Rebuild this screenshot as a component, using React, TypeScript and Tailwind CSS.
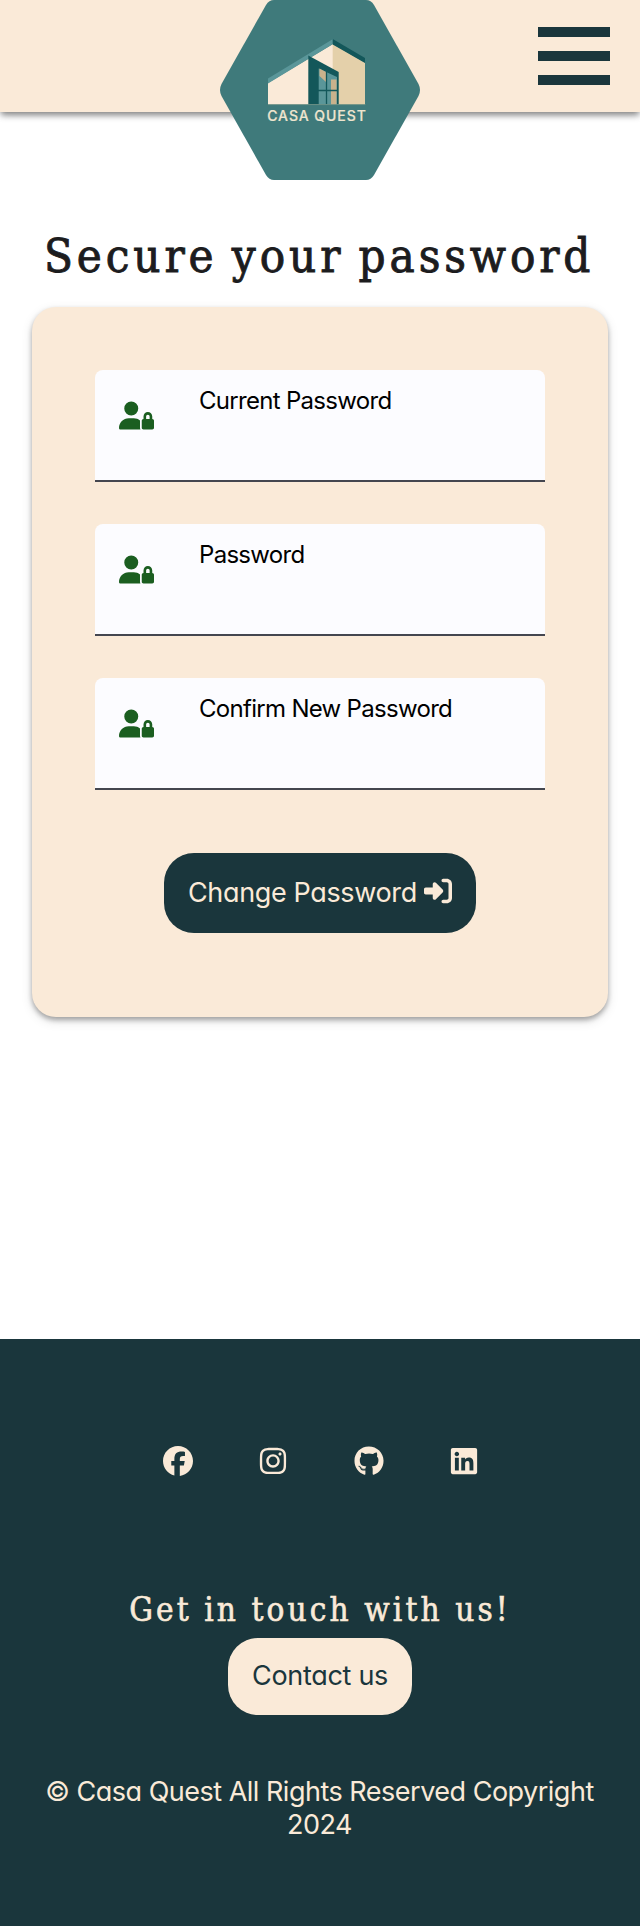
import React from "react";
import {
  FaUserLock,
  FaRightToBracket,
  FaFacebook,
  FaInstagram,
  FaGithub,
  FaLinkedin,
} from "react-icons/fa6";

const fields = ["Current Password", "Password", "Confirm New Password"];
const socials = [FaFacebook, FaInstagram, FaGithub, FaLinkedin];

function Logo() {
  return (
    <svg className="absolute left-[220px] top-0 h-[180px] w-[200px]" viewBox="0 0 200 180">
      <path
        fill="#3f7a7b"
        d="M54 0H146Q151 0 154 5L198.500 84Q201.500 90 198.500 96L154 175Q151 180 146 180H54Q49 180 46 175L1.500 96Q-1.500 90 1.500 84L46 5Q49 0 54 0Z"
      />
      <path fill="#faead8" d="M48 83L113 44V104.500H48Z" />
      <path fill="#5a9699" d="M48 78.500L113 39V44L48 83.500Z" />
      <path fill="#e4d0aa" d="M112.700 44L145 62.500V104.500H112.700Z" />
      <path fill="#13575a" d="M112.700 39L145 58V63L112.700 44.500Z" />
      <path fill="#13575a" d="M88.300 55.500L118.700 72V104.500H88.300Z" />
      <path fill="#5a9699" d="M98.700 68.500L117 77V104.500H98.700Z" />
      <path fill="#c9b28c" d="M99.500 68.500L106 72V82L99.500 76ZM111 79.500H116.500V104.500H111Z" />
      <path stroke="#13575a" strokeWidth="1.300" d="M106.500 72V104M98 90.500H118" />
      <path stroke="#6d9184" strokeWidth="0.800" d="M48 104.600H145.500" />
      <text
        x="47.200"
        y="120.600"
        fill="#eee5cf"
        fontFamily="Inter, sans-serif"
        fontSize="14"
        fontWeight="500"
        stroke="#eee5cf"
        strokeWidth="0.200"
        textLength="98.600"
      >
        CASA QUEST
      </text>
    </svg>
  );
}

export default function App() {
  return (
    <div className="flex h-[1926px] w-[640px] flex-col bg-white font-[Inter,sans-serif]">
      <header className="relative flex h-28 shrink-0 justify-end bg-[#faead8] pr-[30px] pt-[27px] shadow-[0_4px_6px_-1px_rgba(0,0,0,0.4),0_2px_10px_-1px_rgba(0,0,0,0.2)]">
        <Logo />
        <button aria-label="Menu" className="flex h-[58px] w-[72px] flex-col justify-between">
          <span className="h-2.5 w-full bg-[#1a363c]" />
          <span className="h-2.5 w-full bg-[#1a363c]" />
          <span className="h-2.5 w-full bg-[#1a363c]" />
        </button>
      </header>

      <main className="flex h-[1227px] shrink-0 flex-col px-8">
        <h1 className="mt-[115px] h-[80px] whitespace-nowrap pl-[12px] font-['DejaVu_Serif_Condensed','DejaVu_Serif',serif] text-[47px] leading-[58px] tracking-[3.900px] text-[#1c1c1e] [-webkit-text-stroke:0.9px_#1c1c1e] [word-spacing:-3px]">
          Secure your password
        </h1>
        <form className="flex h-[710px] flex-col items-center rounded-[24px] bg-[#faead8] pt-[63px] shadow-[0_3px_5px_rgba(0,0,0,0.3),0_4px_12px_rgba(0,0,0,0.12)]">
          <div className="flex w-[450px] flex-col gap-[42px]">
            {fields.map((label) => (
              <label
                key={label}
                className="flex h-28 rounded-t-lg border-b-2 border-[#44464f] bg-[#fcfcff] pl-6 text-black"
              >
                <FaUserLock className="mt-7 h-[35px] w-[35px] shrink-0 text-[#1b5e20]" />
                <span className="ml-[45px] mt-[15px] whitespace-nowrap text-[24px] leading-8 tracking-[-0.7px]">
                  {label}
                </span>
              </label>
            ))}
          </div>
          <button
            type="button"
            className="mt-[63px] flex h-20 w-[312px] items-center rounded-[30px] bg-[#1a363c] pl-6 text-[27px] tracking-[-0.36px] text-[#faead8]"
          >
            <span className="w-[236px] whitespace-nowrap text-left [font-feature-settings:'cv11']">Change Password</span>
            <FaRightToBracket className="mb-1 h-7 w-7" />
          </button>
        </form>
      </main>

      <footer className="flex grow flex-col items-center bg-[#1a363c] text-[#faead8]">
        <div className="ml-[2px] mt-[107px] flex gap-[65.500px]">
          {socials.map((Icon, i) => (
            <Icon key={i} className="h-[30px] w-[30px]" />
          ))}
        </div>
        <h2 className="mt-[111px] h-[51px] whitespace-nowrap font-['DejaVu_Serif_Condensed','DejaVu_Serif',serif] text-[33px] leading-[45px] tracking-[3.100px] [-webkit-text-stroke:0.6px_#faead8]">
          Get in touch with us!
        </h2>
        <button className="h-[77px] w-[184px] rounded-[30px] bg-[#faead8] text-[27px] tracking-[-0.3px] text-[#1a363c] [font-feature-settings:'cv11']">
          Contact us
        </button>
        <p className="mr-px mt-[60px] text-center text-[27px] leading-[33px] tracking-[-0.5px] [font-feature-settings:'cv11']">
          © Casa Quest All Rights Reserved Copyright
          <br />
          2024
        </p>
      </footer>
    </div>
  );
}
